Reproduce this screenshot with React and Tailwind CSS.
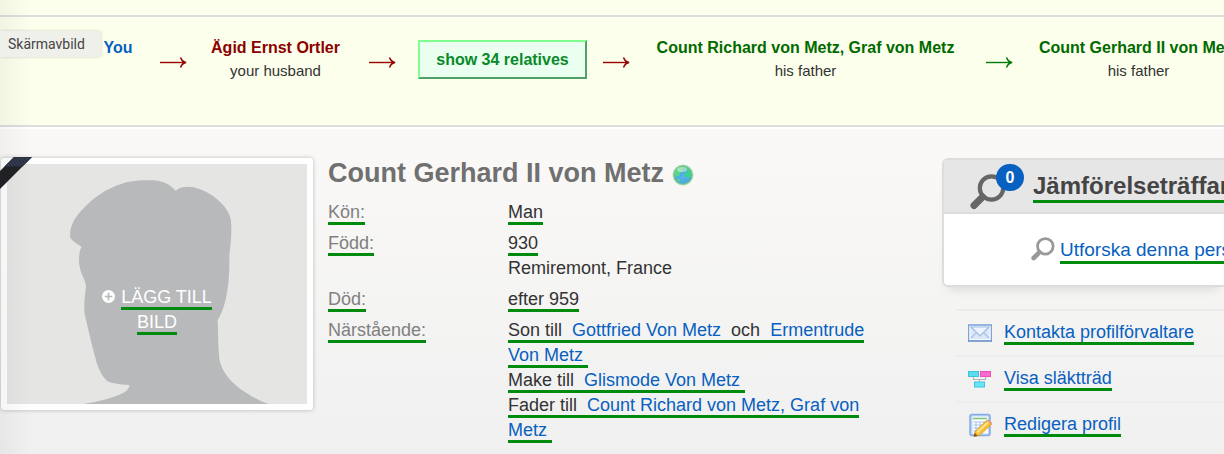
const linkText = "text-[#0860c0]";
const marked = "border-b-3 border-[#008a0e]";

function Arrow({ className }) {
  return (
    <svg viewBox="0 0 27 12" className={`h-3 w-[27px] shrink-0 ${className}`} fill="none" stroke="currentColor" aria-hidden="true">
      <path d="M0 6.500H25" strokeWidth="1.400" />
      <path d="M20.500 1.500C21.500 4 23.500 5.900 26 6.500C23.500 7.100 21.500 9 20.500 11.500" strokeWidth="1.600" />
      <path d="M21 4L26.500 6.500L21 9L23 6.500Z" fill="currentColor" stroke="none" />
    </svg>
  );
}

function Relative({ name, relation, color, className = "" }) {
  return (
    <div className={`shrink-0 text-center whitespace-nowrap ${className}`}>
      <a href="#" className={`block text-base leading-6 font-bold ${color}`}>{name}</a>
      <span className="block text-[15px] leading-[22px]">{relation}</span>
    </div>
  );
}

function Magnifier({ className }) {
  return (
    <svg viewBox="0 0 36 36" className={className} fill="none" stroke="currentColor" aria-hidden="true">
      <circle cx="21.5" cy="14" r="11.7" strokeWidth="4.200" />
      <path d="M12.500 23L4 31.500" strokeWidth="7" strokeLinecap="round" />
    </svg>
  );
}

function Globe() {
  return (
    <svg viewBox="0 0 22 22" className="h-[22px] w-[22px]" aria-hidden="true">
      <defs>
        <radialGradient id="sea" cx="0.5" cy="0.6" r="0.55">
          <stop offset="0" stopColor="#52b4ea" />
          <stop offset="0.7" stopColor="#4fa9d8" />
          <stop offset="1" stopColor="#6cc592" />
        </radialGradient>
      </defs>
      <circle cx="11" cy="11" r="10.5" fill="#b4e4b6" />
      <circle cx="11" cy="11" r="9.2" fill="url(#sea)" stroke="#74c488" />
      <path d="M3 9C5 4.500 8 3 12 3.500L10 5L11 7L8 9L7 12L5 12L4 14L3 11Z" fill="#5ad68a" />
      <path d="M14 4.500C18 6 20 9 19 12L16 14L13 12L12 11L14 9L15 8Z" fill="#3ad58a" />
      <path d="M6 14L8 16L8 18L5 16Z" fill="#62d092" />
      <ellipse cx="10" cy="5.500" rx="5" ry="2.600" fill="#d9fbe0" opacity="0.5" />
    </svg>
  );
}

function MailIcon() {
  return (
    <svg viewBox="0 0 24 24" className="h-6 w-6" fill="none" aria-hidden="true">
      <rect x="0.5" y="4" width="23" height="16" fill="#dbe8fb" stroke="#7ea3d6" strokeWidth="1.500" />
      <rect x="2" y="5.500" width="20" height="13" stroke="#f4f8ff" />
      <path d="M3 17L9 11M21 17L15 11" stroke="#b3c5e2" strokeWidth="1.5" />
      <path d="M3 6L12 15L21 6Z" fill="#edf4ff" stroke="#a3bbe0" strokeWidth="1.2" />
      <path d="M0 20H24" stroke="#6d93c9" />
    </svg>
  );
}

function TreeIcon() {
  return (
    <svg viewBox="0 0 24 24" className="h-6 w-6" fill="none" aria-hidden="true">
      <path d="M5.500 10V12.500H17.500V10M11.500 12.500V15" stroke="#b5b5b5" strokeWidth="1.2" />
      <rect x="0.5" y="4.500" width="10" height="5" fill="#5bdcf0" stroke="#3fc4dc" />
      <rect x="12.500" y="4.500" width="10" height="5" fill="#ff6bd0" stroke="#ee4fbd" />
      <rect x="6.500" y="15" width="10" height="5" fill="#6be4f5" stroke="#3fc4dc" />
    </svg>
  );
}

function EditIcon() {
  return (
    <svg viewBox="0 0 24 24" className="h-6 w-6" fill="none" aria-hidden="true">
      <rect x="2" y="1.500" width="20" height="21" rx="2" fill="#bcd3f5" stroke="#84aae6" strokeWidth="1.500" />
      <rect x="4.500" y="3.500" width="15.500" height="17" fill="#fff" />
      <path d="M5 5.500H19" stroke="#79c67c" strokeWidth="1.600" />
      <path d="M5.500 9H19M5.500 12H19M5.500 15H15M5.500 18H12M8 9V20M12 9V20M16 9V14" stroke="#a6c1ec" strokeWidth="1" />
      <path d="M7 18.500L19 7L24 11L11.500 22.500L6 23.500Z" fill="#f7bd34" stroke="#d09a30" strokeWidth="0.700" />
      <path d="M9 19.500L20.500 9" stroke="#ffe588" strokeWidth="2" />
      <path d="M18.500 8L20 6.500L24 9.500L23.500 11.500Z" fill="#e9a07a" />
      <path d="M5.500 23.500L7 20L9.500 23Z" fill="#7b4d22" />
    </svg>
  );
}

function Portrait() {
  return (
    <div className="relative w-[312px] shrink-0 self-start rounded-[3px] bg-white p-1.5 shadow-[0_0_4px_rgba(0,0,0,0.25)]">
      <svg viewBox="0 0 900 720" className="block w-full bg-[#e5e5e3]" aria-hidden="true">
        <path
          fill="#b8b9bb"
          d="M229 720C290 710 340 695 358 681Q368 673 367 663C340 661 318 658 304 653C290 645 274 618 266 585C254 540 242 490 233 450C229 420 235 390 237 367C235 345 219 330 216 295C216 270 218 258 224 248C210 240 198 233 190 222C186 190 202 163 222 141C255 104 295 74 345 59C380 48 410 49 440 49C472 51 492 64 506 81C520 66 550 65 580 76C625 94 665 132 671 165C676 205 671 235 667 275C668 330 664 372 656 407C649 435 641 454 632 468C634 510 633 550 637 585C644 622 668 650 699 674C730 695 760 713 787 720Z"
        />
      </svg>
      <a href="#" className="absolute inset-x-0 top-[127px] mx-auto w-32 text-center text-lg leading-[25px] text-white">
        <svg viewBox="0 0 14 14" className="mr-1.5 mb-1 inline h-[13px] w-[13px]" aria-hidden="true">
          <circle cx="7" cy="7" r="7" fill="#fff" />
          <path d="M7 3V11M3 7H11" stroke="#b8b9bb" strokeWidth="1.800" />
        </svg>
        <span className={marked}>LÄGG TILL BILD</span>
      </a>
      <svg viewBox="0 0 32 33" className="absolute -top-px -left-px h-[33px] w-8" aria-hidden="true">
        <path d="M14 0H32L0 32V14Z" fill="#202226" />
        <path d="M14 0H32L22.500 9.500H4.500Z" fill="#2c3345" />
        <path d="M14 2H28M12 4H26M10 6H24M8 8H22" stroke="#46506a" strokeWidth="0.800" strokeDasharray="1 2" />
      </svg>
    </div>
  );
}

function Fact({ label, children }) {
  return (
    <div className="flex">
      <dt className="w-[180px] shrink-0 text-[#808080]"><span className={marked}>{label}</span></dt>
      <dd className="flex-1">{children}</dd>
    </div>
  );
}

function Kin({ children }) {
  return <a href="#" className={linkText}>{children}</a>;
}

function Action({ icon, children }) {
  return (
    <li className="flex h-[46px] items-center gap-3 border-t-2 border-[#ececec] pl-[11px] whitespace-nowrap">
      {icon}
      <a href="#" className={`text-lg leading-5 ${linkText} ${marked}`}>{children}</a>
    </li>
  );
}

export default function App() {
  return (
    <div className="relative min-h-screen overflow-hidden bg-linear-to-b from-[#faf9f7] from-30% to-[#f0f0f0] font-['Liberation_Sans',Arial,sans-serif] text-[#333]">
      <div className="border-b-2 border-white bg-[#fcffec]">
        <div className="h-[15px]" />
        <nav className="flex h-28 items-start overflow-hidden border-y-2 border-[#ddd] pt-[19px]">
          <span className="z-10 -mt-[5px] w-[101px] shrink-0 rounded-r bg-[#f0f0eb] pl-2 font-['Roboto',sans-serif] text-sm leading-[26px] text-[#444] shadow-[0_0_3px_rgba(0,0,0,0.2)]">Skärmavbild</span>
          <Relative name="You" color={linkText} className="ml-px w-8" />
          <Arrow className="mt-5 mr-[22px] ml-[26px] text-[#990000]" />
          <Relative name="Ägid Ernst Ortler" relation="your husband" color="text-[#8b0000]" className="w-[133px]" />
          <Arrow className="mt-5 mr-[22px] ml-[27px] text-[#990000]" />
          <button type="button" className="mt-1 h-[39px] w-[169px] shrink-0 border-2 border-t-[#80ff90] border-r-[#50a068] border-b-[#50a068] border-l-[#80ff90] bg-[#eafff0] text-base font-bold text-[#088a28]">show 34 relatives</button>
          <Arrow className="mt-5 mr-[22px] ml-4 text-[#990000]" />
          <Relative name="Count Richard von Metz, Graf von Metz" relation="his father" color="text-[#006a00]" className="w-[307px]" />
          <Arrow className="mt-5 mr-[22px] ml-[27px] text-[#007a0a]" />
          <Relative name="Count Gerhard II von Metz" relation="his father" color="text-[#006a00]" className="w-[207px]" />
        </nav>
      </div>

      <main className="flex pt-[29px] pl-px">
        <Portrait />
        <section className="min-w-0 flex-1 pr-12 pl-[15px]">
          <div className="flex items-center gap-2">
            <h1 className="text-[27px] leading-[30px] font-bold text-[#707070]">Count Gerhard II von Metz</h1>
            <div className="pt-1"><Globe /></div>
          </div>
          <dl className="mt-3 flex flex-col gap-1.5 text-lg leading-[25px]">
            <Fact label="Kön:"><span className={marked}>Man</span></Fact>
            <Fact label="Född:"><span className={marked}>930</span><br />Remiremont, France</Fact>
            <Fact label="Död:"><span className={marked}>efter 959</span></Fact>
            <Fact label="Närstående:">
              <span className={marked}>
                Son till&nbsp; <Kin>Gottfried Von Metz</Kin>&nbsp; och&nbsp; <Kin>Ermentrude Von Metz</Kin>&nbsp;
                <br />
                Make till&nbsp; <Kin>Glismode Von Metz</Kin>&nbsp;
                <br />
                Fader till&nbsp; <Kin>Count Richard von Metz, Graf von Metz</Kin>&nbsp;
              </span>
            </Fact>
          </dl>
        </section>
        <aside className="w-[282px] shrink-0 whitespace-nowrap">
          <div className="rounded-l-md border-2 border-r-0 border-[#ddd] bg-white shadow-[0_8px_10px_-6px_rgba(0,0,0,0.12)]">
            <div className="flex h-[54px] items-center overflow-hidden rounded-tl border-b-2 border-[#ddd] bg-[#e6e6e6] pl-[26px]">
              <div className="relative mr-[7px] h-12 w-14 shrink-0">
                <Magnifier className="absolute bottom-0 left-0 h-9 w-9 text-[#666]" />
                <span className="absolute top-0.5 left-[26px] flex h-[27px] w-7 items-center justify-center rounded-full bg-[#0860c0] text-base font-bold text-white">0</span>
              </div>
              <h2 className={`mt-0.5 text-2xl leading-7 font-bold text-[#444] ${marked}`}>Jämförelseträffar</h2>
            </div>
            <div className="flex h-[71px] items-center overflow-hidden pl-[87px]">
              <Magnifier className="mr-[5px] mb-0.5 h-6 w-6 shrink-0 text-[#999]" />
              <a href="#" className={`mt-1 text-[19px] leading-[22px] ${linkText} ${marked}`}>Utforska denna person</a>
            </div>
          </div>
          <ul className="mt-[22px] ml-[15px]">
            <Action icon={<MailIcon />}>Kontakta profilförvaltare</Action>
            <Action icon={<TreeIcon />}>Visa släktträd</Action>
            <Action icon={<EditIcon />}>Redigera profil</Action>
          </ul>
        </aside>
      </main>
      <div className="pointer-events-none absolute inset-y-0 left-0 w-8 bg-linear-to-r from-black/4 to-transparent" />
    </div>
  );
}
